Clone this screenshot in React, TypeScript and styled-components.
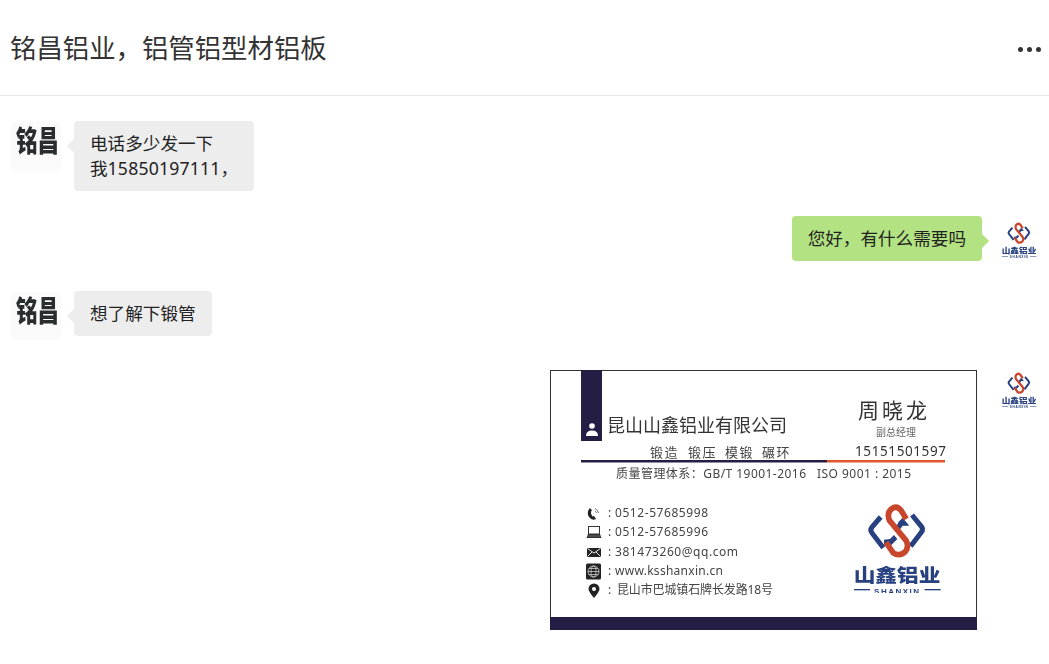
import styled, { createGlobalStyle } from "styled-components";

const GlobalStyle = createGlobalStyle`
    html, body {
        margin: 0;
        padding: 0;
        background: #fff;
        overflow: hidden;
    }
    * {
        box-sizing: border-box;
    }
`;

const NAVY = "#241e44";
const ORANGE = "#e0562a";
const LOGO_BLUE = "#27407f";
const LOGO_RED = "#c8472c";
const FONT = `"Noto Sans", "Noto Sans CJK SC", sans-serif`;

const C = {
    Page: styled.div`
        width: 1049px;
        height: 664px;
        overflow: hidden;
        background: #fff;
        font-family: ${FONT};
        color: #222;
    `,
    Header: styled.header`
        height: 96px;
        display: flex;
        align-items: center;
        justify-content: space-between;
        padding: 0 8px 0 10px;
        border-bottom: 1px solid #e7e7e7;
    `,
    Title: styled.h1`
        margin: 0;
        font-size: 26.4px;
        line-height: 36px;
        font-weight: 400;
        color: #333;
    `,
    More: styled.div`
        display: flex;
        gap: 4px;
        margin-top: 3px;
    `,
    Dot: styled.span`
        width: 5px;
        height: 5px;
        border-radius: 50%;
        background: #333;
    `,
    List: styled.main`
        display: flex;
        flex-direction: column;
        gap: 25px;
        padding: 25px 5px 0 11px;
    `,
    Row: styled.div<{ $mine?: boolean }>`
        display: flex;
        align-items: flex-start;
        flex-direction: ${({ $mine }) => ($mine ? "row-reverse" : "row")};
        gap: ${({ $mine }) => ($mine ? 12 : 13)}px;
    `,
    TextAvatar: styled.div`
        width: 50px;
        height: 50px;
        flex: none;
        border-radius: 6px;
        background: #fbfbfb;
        display: flex;
        justify-content: center;
        padding: 4px 0 0 3px;
    `,
    AvatarGlyphs: styled.span`
        display: block;
        font-size: 21.5px;
        line-height: 36px;
        font-weight: 900;
        color: #2a2d2e;
        transform: scale(1, 1.35);
    `,
    LogoAvatar: styled.div`
        width: 50px;
        height: 50px;
        flex: none;
        display: flex;
        justify-content: center;
        padding-top: 6px;
        filter: blur(0.25px);
    `,
    Bubble: styled.div<{ $mine?: boolean }>`
        position: relative;
        padding: 10px 16px;
        border-radius: 4px;
        font-size: 17.6px;
        line-height: 25px;
        background: ${({ $mine }) => ($mine ? "#b2e281" : "#ededed")};

        &::before {
            content: "";
            position: absolute;
            top: 20px;
            ${({ $mine }) => ($mine ? "right: -5px;" : "left: -5px;")}
            width: 10px;
            height: 10px;
            transform: rotate(45deg);
            background: inherit;
        }
    `,
    Digits: styled.span`
        letter-spacing: 0.2px;
    `,
    CardWrap: styled.div`
        margin: 4px 5px 0 0;
        width: 427px;
        height: 260px;
        flex: none;
        filter: blur(0.35px);
    `,
};

const CardText = styled.text<{ $size: number; $color?: string; $weight?: number; $spacing?: number }>`
    font-family: "Noto Sans", "Noto Sans CJK SC", sans-serif;
    font-size: ${({ $size }) => $size}px;
    font-weight: ${({ $weight }) => $weight ?? 400};
    letter-spacing: ${({ $spacing }) => $spacing ?? 0}px;
    fill: ${({ $color }) => $color ?? "#333"};
`;

const Logo = ({ size, x, y }: { size: number; x?: number; y?: number }) => (
    <svg x={x} y={y} width={size} height={size} viewBox="66 24 270 270">
        <path d="M152 66 L126 96 Q119 105 126 114 L160 158" fill="none" stroke={LOGO_BLUE} strokeWidth="15" />
        <path d="M246 60 L274 94 Q281 103 274 112 L242 154" fill="none" stroke={LOGO_BLUE} strokeWidth="15" />
        <polygon points="206,80 218,68 238,92 218,92 208,106 198,96" fill={LOGO_BLUE} />
        <polygon points="192,120 202,132 184,150 162,150 162,134 180,132" fill={LOGO_BLUE} />
        <path
            d="M229 72 L213 46 Q200 30 184 42 Q170 54 178 76 L228 136 Q238 154 226 170 Q208 186 190 174 L168 142"
            fill="none"
            stroke={LOGO_RED}
            strokeWidth="17"
        />
        <text transform="translate(201 260) scale(1 0.85)" textAnchor="middle" fontFamily={FONT} fontSize="65" fontWeight="900" fill={LOGO_BLUE}>
            山鑫铝业
        </text>
        <rect x="72" y="282" width="48" height="4" fill={LOGO_BLUE} />
        <rect x="284" y="282" width="48" height="4" fill={LOGO_BLUE} />
        <text x="202" y="297" textAnchor="middle" fontFamily="Liberation Sans, sans-serif" fontSize="24" fontWeight="700" letterSpacing="4.5" fill={LOGO_BLUE}>
            SHANXIN
        </text>
    </svg>
);

const contacts = [
    { y: 146.5, x: 65, text: "0512-57685998", len: 93 },
    { y: 165.5, x: 65, text: "0512-57685996", len: 93 },
    { y: 185.5, x: 65, text: "381473260@qq.com", len: 123 },
    { y: 204.5, x: 65, text: "www.ksshanxin.cn", len: 108 },
    { y: 223.5, x: 67, text: "昆山市巴城镇石牌长发路18号", len: 156 },
];

const specialties = [
    { x: 100, text: "锻造" },
    { x: 138, text: "锻压" },
    { x: 175, text: "模锻" },
    { x: 212, text: "碾环" },
];

const BusinessCard = () => (
    <svg width="427" height="260" viewBox="0 0 427 260">
        <rect x="0.5" y="0.5" width="426" height="259" fill="#fff" stroke="#333" />
        <rect x="31" y="0" width="21" height="71" fill={NAVY} />
        <circle cx="42" cy="56" r="2.8" fill="#fff" />
        <path d="M36 66 Q36 60.5 42 60.5 Q48 60.5 48 66 Z" fill="#fff" />

        <CardText x="57" y="62" $size={18}>昆山山鑫铝业有限公司</CardText>
        {specialties.map((s) => (
            <CardText key={s.x} x={s.x} y="87" $size={13} $spacing={1.5} $color="#444">{s.text}</CardText>
        ))}
        <rect x="31" y="90" width="246" height="2.5" fill={NAVY} />
        <rect x="277" y="90" width="118" height="2.5" fill={ORANGE} />
        <CardText x="66" y="108" $size={12} textLength="190" $color="#444">质量管理体系：GB/T 19001-2016</CardText>
        <CardText x="267" y="108" $size={12} textLength="94" $color="#444">ISO 9001 : 2015</CardText>

        <CardText x="308" y="48" $size={21} $spacing={3}>周晓龙</CardText>
        <CardText x="326" y="66" $size={10} $color="#666">副总经理</CardText>
        <CardText x="305" y="86" $size={13.5} textLength="91">15151501597</CardText>

        {contacts.map((c) => (
            <g key={c.y}>
                <CardText x="58" y={c.y} $size={12} $color="#444">:</CardText>
                <CardText x={c.x} y={c.y} $size={12} textLength={c.len} $color="#444">{c.text}</CardText>
            </g>
        ))}

        {/* phone */}
        <path d="M40 138 Q36 142 39 147 Q42 151 46 149 L44 146 L42.5 146.5 Q40.5 144 41 141.5 L42 140.5 Z" fill="#222" />
        <path d="M45 138.5 Q48 140 48.5 143 M45 141 Q46 141.5 46.5 143" fill="none" stroke="#555" strokeWidth="0.8" />
        {/* fax */}
        <rect x="38.5" y="156.5" width="11" height="7.5" fill="#fff" stroke="#333" />
        <path d="M38 164 H50 L51.5 168 H36.5 Z" fill="#333" />
        <path d="M38.5 166 H49.5" fill="none" stroke="#bbb" strokeWidth="0.7" strokeDasharray="1 1" />
        {/* mail */}
        <rect x="37" y="178" width="14" height="9" fill="#222" />
        <path d="M37.5 178.5 L44 183 L50.5 178.5 M37.5 186.5 L42 182 M50.5 186.5 L46 182" fill="none" stroke="#fff" strokeWidth="0.9" />
        {/* globe */}
        <rect x="36" y="193.5" width="15" height="16" rx="1.5" fill="#222" />
        <circle cx="43.5" cy="201.5" r="5.5" fill="none" stroke="#ddd" strokeWidth="0.8" />
        <ellipse cx="43.5" cy="201.5" rx="2.5" ry="5.5" fill="none" stroke="#ddd" strokeWidth="0.7" />
        <path d="M38 201.5 H49 M39 198.5 H48 M39 204.5 H48" fill="none" stroke="#ddd" strokeWidth="0.7" />
        {/* pin */}
        <path d="M44 228 Q38.5 221.5 38.5 219 A5.5 5.5 0 0 1 49.5 219 Q49.5 221.5 44 228 Z" fill="#222" />
        <circle cx="44" cy="219" r="2" fill="#fff" />

        <Logo x={302} y={133} size={90} />

        <rect x="0" y="247" width="427" height="13" fill={NAVY} />
    </svg>
);

const TextAvatar = () => (
    <C.TextAvatar>
        <C.AvatarGlyphs>铭昌</C.AvatarGlyphs>
    </C.TextAvatar>
);

const LogoAvatar = () => (
    <C.LogoAvatar>
        <Logo size={36} />
    </C.LogoAvatar>
);

const App = () => (
    <C.Page>
        <GlobalStyle />
        <C.Header>
            <C.Title>铭昌铝业，铝管铝型材铝板</C.Title>
            <C.More>
                <C.Dot />
                <C.Dot />
                <C.Dot />
            </C.More>
        </C.Header>
        <C.List>
            <C.Row>
                <TextAvatar />
                <C.Bubble>
                    电话多少发一下
                    <br />
                    我<C.Digits>15850197111</C.Digits>，
                </C.Bubble>
            </C.Row>
            <C.Row $mine>
                <LogoAvatar />
                <C.Bubble $mine>您好，有什么需要吗</C.Bubble>
            </C.Row>
            <C.Row>
                <TextAvatar />
                <C.Bubble>想了解下锻管</C.Bubble>
            </C.Row>
            <C.Row $mine>
                <LogoAvatar />
                <C.CardWrap>
                    <BusinessCard />
                </C.CardWrap>
            </C.Row>
        </C.List>
    </C.Page>
);

export default App;
